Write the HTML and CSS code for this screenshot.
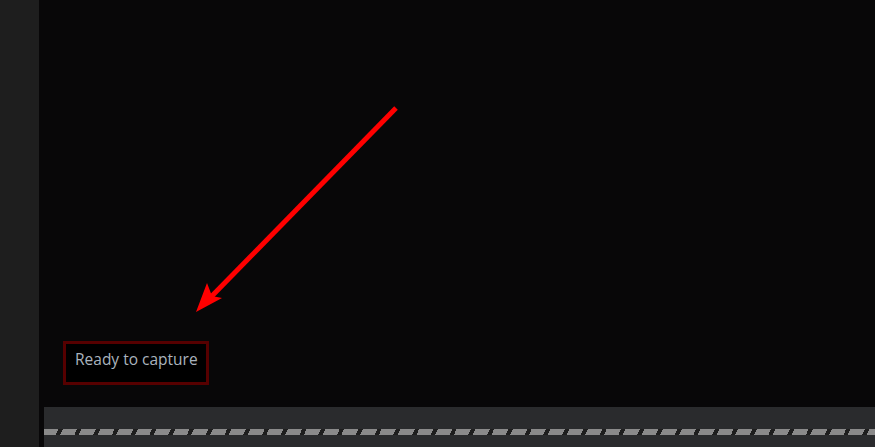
FILE: index.html
```html
<!DOCTYPE html>
<html>
<head>
<meta charset="utf-8">
<link rel="stylesheet" href="styles.css">
</head>
<body>
<div class="app">
  <aside class="sidebar"></aside>
  <main class="main">
    <section class="stage">
      <svg class="arrow" width="875" height="447" viewBox="0 0 875 447">
        <line x1="396" y1="108" x2="208" y2="300" stroke="#ff0000" stroke-width="5"/>
        <polygon points="196,312 207,283 212,296 222,298" fill="#ff0000"/>
      </svg>
      <div class="status">Ready to capture</div>
    </section>
    <footer class="bottombar">
      <div class="stripe"></div>
    </footer>
  </main>
</div>
</body>
</html>
```
FILE: styles.css
```css
html, body {
  margin: 0;
  padding: 0;
  height: 100%;
  background: #080708;
  overflow: hidden;
}
.app {
  display: flex;
  width: 875px;
  height: 447px;
}
.sidebar {
  width: 39px;
  flex: none;
  background: #1e1e1e;
}
.main {
  flex: 1;
  display: flex;
  flex-direction: column;
  background: #080708;
}
.stage {
  flex: 1;
  display: flex;
  flex-direction: column;
  justify-content: flex-end;
  align-items: flex-start;
  padding: 0 0 22px 24px;
}
.arrow {
  position: absolute;
  left: 0;
  top: 0;
  pointer-events: none;
}
.status {
  box-sizing: border-box;
  width: 146px;
  height: 44px;
  border: 3px solid #560000;
  background: #000;
  color: #aab3bd;
  font-family: "Open Sans", "Noto Sans", sans-serif;
  font-size: 15.5px;
  line-height: 30px;
  padding: 0 0 0 9px;
  white-space: nowrap;
}
.bottombar {
  height: 40px;
  margin-left: 5px;
  background: #2a2b2d;
  padding-top: 22px;
  box-sizing: border-box;
}
.stripe {
  height: 6px;
  background: repeating-linear-gradient(
    115deg,
    #8a8a8a 0px,
    #8a8a8a 13px,
    #1e1e1e 13px,
    #1e1e1e 17px
  );
}
```
